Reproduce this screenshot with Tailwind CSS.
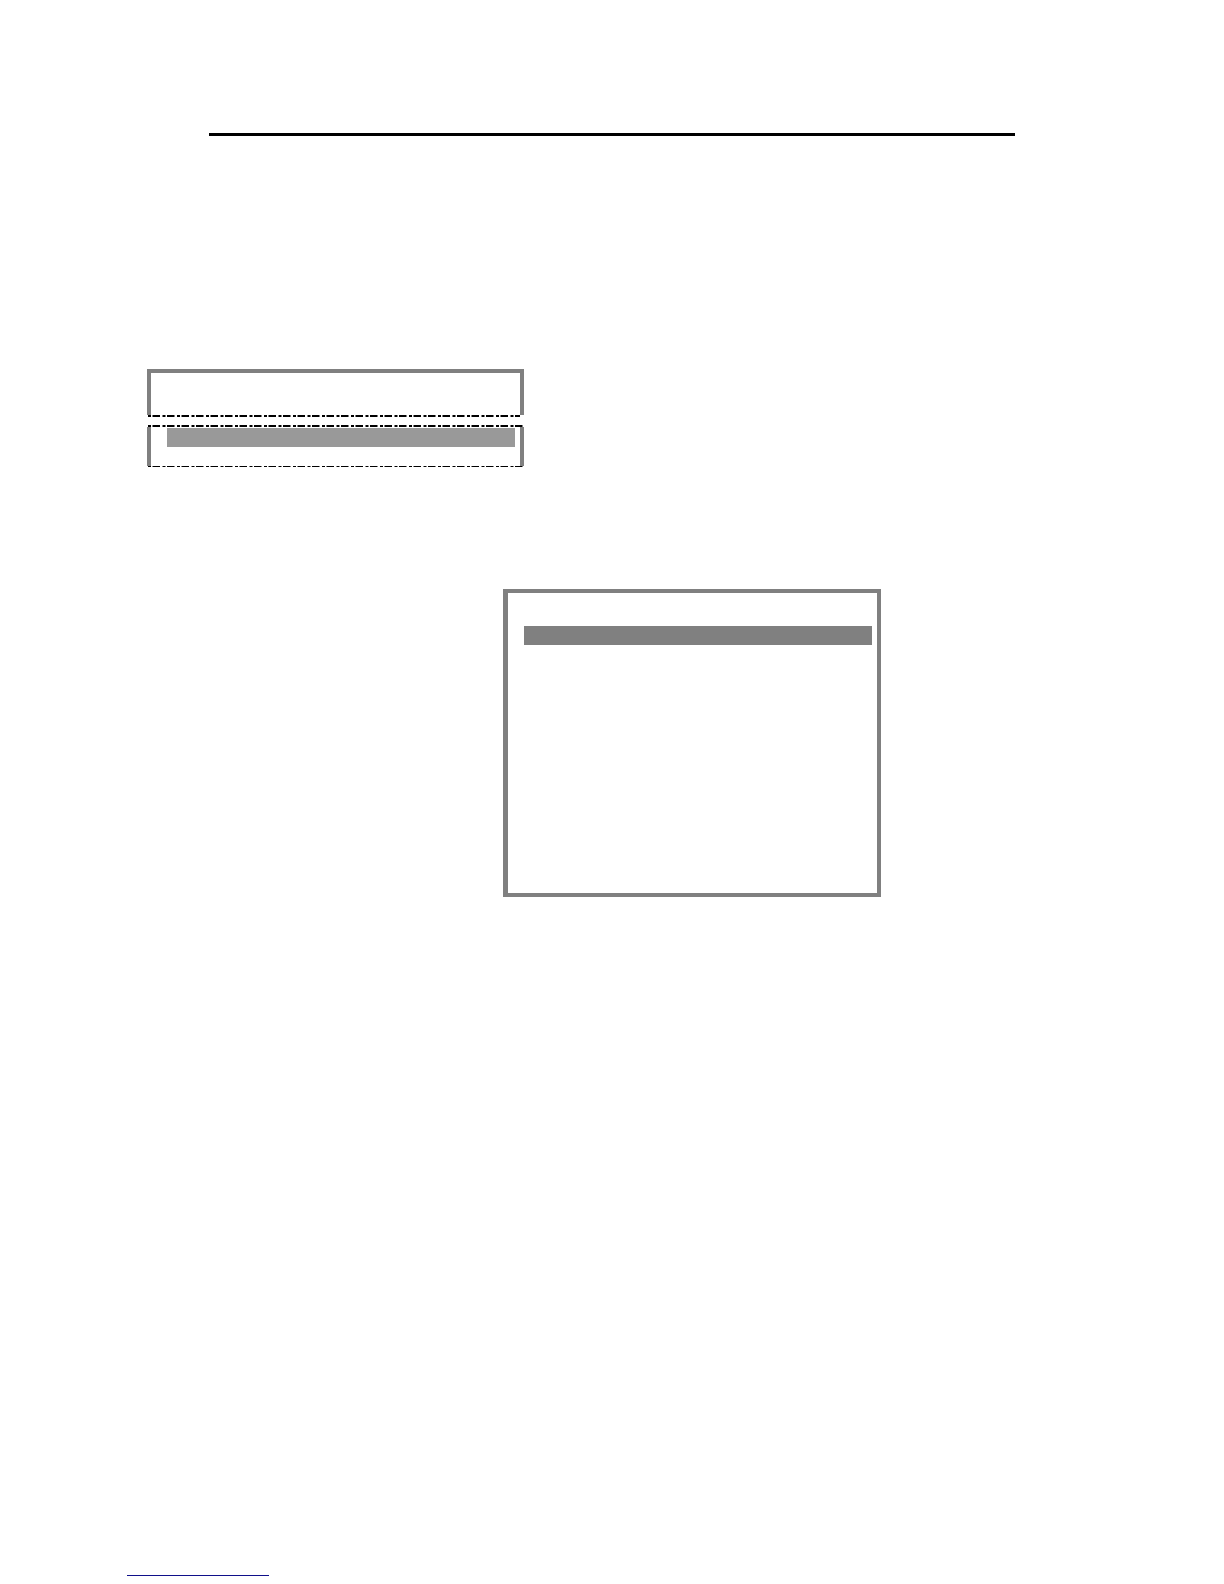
<!DOCTYPE html>
<html lang="en">
<head>
  <meta charset="UTF-8" />
  <meta name="viewport" content="width=device-width, initial-scale=1.0" />
  <title>Document</title>
  <script src="https://cdn.jsdelivr.net/npm/@tailwindcss/browser@4"></script>
</head>
<body class="bg-white min-h-screen flex flex-col">
  <!-- Header rule -->
  <header class="pt-[133px] px-[209px]">
    <hr class="border-0 h-[3px] bg-black">
  </header>

  <main class="flex-1">
    <!-- Broken panel -->
    <section class="mt-[233px] ml-[147px] w-[377px]">
      <div class="h-[46px] border-4 border-b-0 border-[#808080]"></div>
      <svg class="block w-full h-[2px] overflow-visible" aria-hidden="true">
        <line x1="1" y1="1" x2="373" y2="1" stroke="#000" stroke-width="2" stroke-dasharray="7.5 2.5 3 1.5" stroke-dashoffset="10" />
      </svg>
      <svg class="block w-full h-[2px] mt-2 overflow-visible" aria-hidden="true">
        <line x1="1" y1="1" x2="378" y2="1" stroke="#000" stroke-width="2" stroke-dasharray="7.5 2.5 3 1.5" stroke-dashoffset="10" />
      </svg>
      <div class="h-[39px] border-x-4 border-[#808080] pt-px pl-4 pr-[5px]">
        <div class="h-[19px] bg-[#999999]"></div>
      </div>
      <svg class="block w-full h-px overflow-visible" aria-hidden="true">
        <line x1="1" y1="0.5" x2="378" y2="0.5" stroke="#000" stroke-dasharray="7.5 2.5 3 1.5" stroke-dashoffset="10" />
      </svg>
    </section>

    <!-- Panel -->
    <section class="mt-[122px] ml-[503px] w-[378px] h-[308px] border-4 border-l-[5px] border-[#808080] pt-[33px] pl-4 pr-[5px]">
      <div class="h-[19px] bg-[#808080]"></div>
    </section>
  </main>

  <!-- Footer link -->
  <footer class="pl-[127px] pb-2">
    <a href="#" aria-label="Link" class="block w-[142px] h-px bg-[#10108a]"></a>
  </footer>
</body>
</html>
